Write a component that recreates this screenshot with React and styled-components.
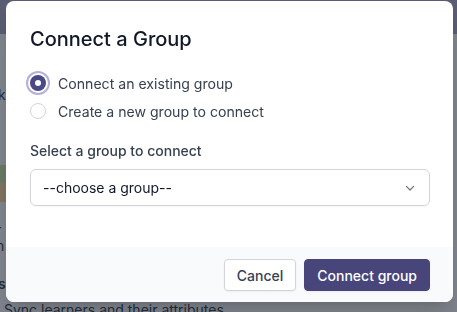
import React from "react";
import styled, { createGlobalStyle } from "styled-components";

const Global = createGlobalStyle`
  html, body { margin: 0; padding: 0; }
  body {
    width: 457px;
    height: 312px;
    overflow: hidden;
    font-family: Inter, "Noto Sans", sans-serif;
    -webkit-font-smoothing: antialiased;
  }
  * { box-sizing: border-box; }
`;

const Page = styled.div`
  width: 457px;
  height: 312px;
  background: #f4f4f6;
  overflow: hidden;
`;

const TopBar = styled.div`
  height: 34px;
  background: #a9a5c4;
`;

const Content = styled.div`
  display: flex;
  flex-direction: column;
  align-items: flex-start;
  color: #374151;
  font-size: 14px;
`;

const GhostText = styled.div`
  flex: none;
  margin-top: ${(p) => p.$mt || 0}px;
  margin-left: ${(p) => p.$ml || 0}px;
  line-height: 16px;
  white-space: nowrap;
  font-weight: ${(p) => (p.$bold ? 600 : 400)};
`;

const Bar = styled.div`
  flex: none;
  height: ${(p) => p.$h}px;
  width: 60px;
  background: ${(p) => p.$c};
  margin-top: ${(p) => p.$mt || 0}px;
`;

const Overlay = styled.div`
  position: fixed;
  inset: 0;
  background: rgba(17, 24, 39, 0.52);
  display: flex;
  justify-content: flex-start;
  align-items: flex-start;
  padding: 1px 0 0 6px;
`;

const Modal = styled.div`
  width: 447px;
  height: 301px;
  background: #ffffff;
  border-radius: 8px;
  overflow: hidden;
  display: flex;
  flex-direction: column;
  box-shadow: 0 20px 25px -5px rgba(0,0,0,0.1), 0 8px 10px -6px rgba(0,0,0,0.1);
`;

const Body = styled.div`
  padding: 24px 23px 0 24px;
  flex: 1;
  display: flex;
  flex-direction: column;
`;

const Title = styled.h2`
  margin: 0;
  font-size: 20px;
  line-height: 28px;
  font-weight: 500;
  color: #111827;
`;

const RadioGroup = styled.div`
  margin-top: 20px;
  display: flex;
  flex-direction: column;
  gap: 8px;
`;

const RadioRow = styled.label`
  display: flex;
  align-items: center;
  gap: 12px;
  height: 20px;
  font-size: 14.1px;
  color: #374151;
  cursor: pointer;
`;

const RadioDot = styled.span`
  width: 16px;
  height: 16px;
  border-radius: 50%;
  flex: none;
  background: ${(p) => (p.$checked ? "#4b4886" : "#ffffff")};
  border: ${(p) => (p.$checked ? "none" : "1px solid #d1d5db")};
  box-shadow: ${(p) =>
    p.$checked ? "0 0 0 2px #ffffff, 0 0 0 4px #b3b0d9" : "none"};
  display: flex;
  align-items: center;
  justify-content: center;
  &::after {
    content: "";
    display: ${(p) => (p.$checked ? "block" : "none")};
    width: 6px;
    height: 6px;
    border-radius: 50%;
    background: #ffffff;
  }
`;

const FieldLabel = styled.div`
  margin-top: 20px;
  font-size: 14px;
  line-height: 20px;
  font-weight: 500;
  color: #374151;
`;

const Select = styled.div`
  margin-top: 8px;
  height: 37px;
  border: 1px solid #d1d5db;
  border-radius: 6px;
  display: flex;
  align-items: center;
  justify-content: space-between;
  padding: 0 11px 0 12px;
  font-size: 14px;
  color: #111827;
  box-shadow: 0 1px 2px rgba(0,0,0,0.04);
`;

const Footer = styled.div`
  height: 55px;
  background: #f9fafb;
  display: flex;
  justify-content: flex-end;
  align-items: flex-start;
  gap: 8px;
  padding: 12px 23px 0 0;
`;

const Button = styled.button`
  height: 32px;
  padding: 0 12px;
  border-radius: 4px;
  font-family: inherit;
  font-size: 14px;
  font-weight: 500;
  cursor: pointer;
  border: 1px solid ${(p) => (p.$primary ? "#48457b" : "#d1d5db")};
  background: ${(p) => (p.$primary ? "#48457b" : "#ffffff")};
  color: ${(p) => (p.$primary ? "#ffffff" : "#374151")};
  box-shadow: 0 1px 2px rgba(0,0,0,0.05);
`;

function Chevron() {
  return (
    <svg width="16" height="16" viewBox="0 0 20 20" fill="none">
      <path d="M5.5 8l4.5 4.5L14.5 8" stroke="#6b7280" strokeWidth="1.5" strokeLinecap="round" strokeLinejoin="round" />
    </svg>
  );
}

export default function App() {
  return (
    <>
      <Global />
      <Page>
        <TopBar />
        <Content>
          <GhostText $mt={53} $ml={-2}>k</GhostText>
          <Bar $h={18} $c="#c4e0a4" $mt={62} />
          <Bar $h={19} $c="#f2d49b" />
          <GhostText $mt={20} $ml={-4}>r</GhostText>
          <GhostText $ml={-4}>n</GhostText>
          <GhostText $mt={22} $ml={-2} $bold>s</GhostText>
          <GhostText $mt={10} $ml={4}>Sync learners and their attributes</GhostText>
        </Content>
        <Overlay>
          <Modal>
            <Body>
              <Title>Connect a Group</Title>
              <RadioGroup>
                <RadioRow>
                  <RadioDot $checked />
                  Connect an existing group
                </RadioRow>
                <RadioRow>
                  <RadioDot />
                  Create a new group to connect
                </RadioRow>
              </RadioGroup>
              <FieldLabel>Select a group to connect</FieldLabel>
              <Select>
                <span>--choose a group--</span>
                <Chevron />
              </Select>
            </Body>
            <Footer>
              <Button>Cancel</Button>
              <Button $primary>Connect group</Button>
            </Footer>
          </Modal>
        </Overlay>
      </Page>
    </>
  );
}
